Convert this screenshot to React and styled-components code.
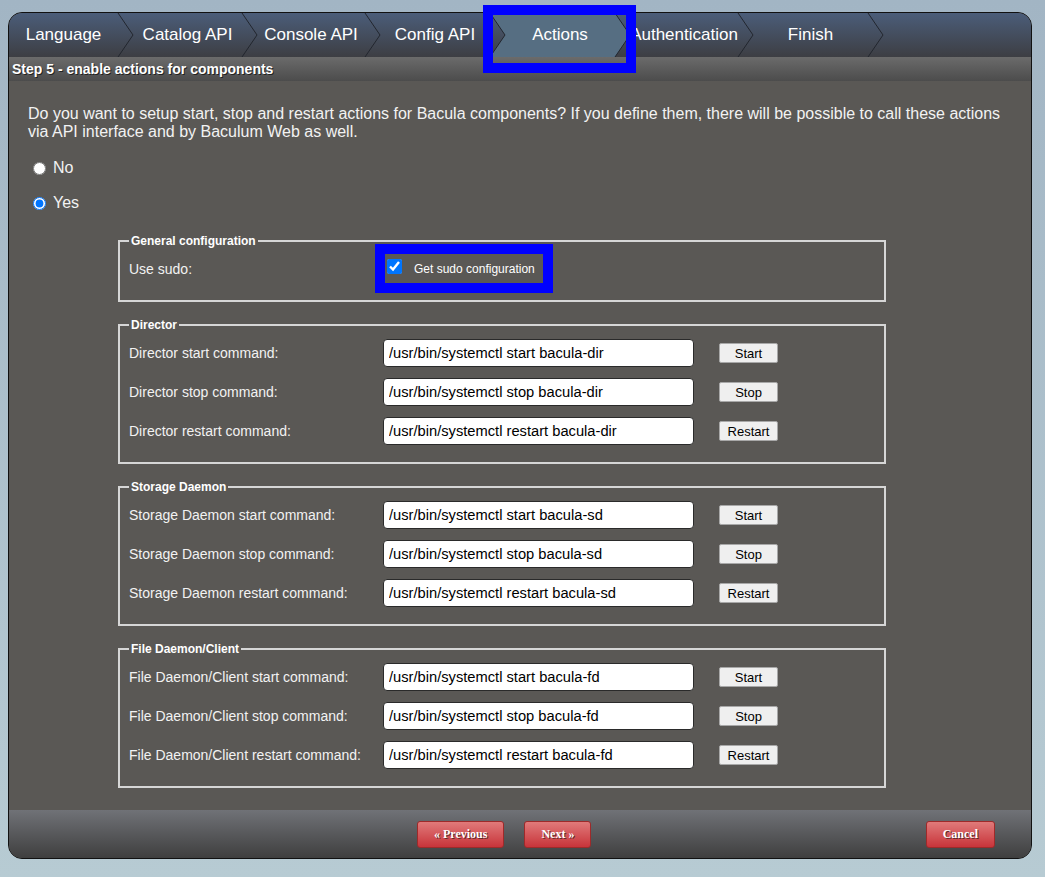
import React from 'react';
import styled, { createGlobalStyle } from 'styled-components';

const GlobalStyle = createGlobalStyle`
  html, body { margin: 0; padding: 0; }
  body {
    background: linear-gradient(#a2b5c4, #b7cbd3);
    min-height: 877px;
    font-family: "Liberation Sans", Arial, sans-serif;
  }
`;

const Page = styled.div`
  box-sizing: border-box;
  min-height: 877px;
  padding: 12px 13px 18px 8px;
`;

const Container = styled.div`
  position: relative;
  border: 1px solid #111;
  border-radius: 14px;
  background: #5a5855;
`;

const TabBar = styled.div`
  display: flex;
  height: 44px;
  border-radius: 13px 13px 0 0;
  background: linear-gradient(#4b5d79, #3d3e43);
`;

const Tab = styled.div`
  position: relative;
  box-sizing: border-box;
  width: ${p => p.$w}px;
  padding-left: ${p => (p.$first ? 0 : 15)}px;
  display: flex;
  align-items: center;
  justify-content: center;
  color: #fff;
  font-size: 17px;
  background: ${p => (p.$active ? '#566e82' : 'transparent')};
`;

const TabLabel = styled.span`
  position: relative;
  z-index: 3;
`;

const Arrow = styled.svg`
  position: absolute;
  top: 0;
  left: 100%;
  width: 15px;
  height: 44px;
  z-index: 2;
  overflow: visible;
`;

const Highlight = styled.div`
  position: absolute;
  left: ${p => p.$l}px;
  top: ${p => p.$t}px;
  width: ${p => p.$w}px;
  height: ${p => p.$h}px;
  box-sizing: border-box;
  border: 10px solid #0000ff;
  z-index: 5;
  pointer-events: none;
`;

const StepHeader = styled.div`
  height: 24px;
  line-height: 24px;
  padding-left: 3px;
  background: linear-gradient(#6b6b6b, #4c4c4c);
  color: #fff;
  font-size: 14px;
  font-weight: bold;
  text-shadow: 1px 1px 0 #222;
`;

const Content = styled.div`
  padding: 24px 20px 22px 19px;
  color: #f2f2f2;
`;

const Intro = styled.p`
  margin: 0;
  font-size: 16px;
  line-height: 18px;
`;

const RadioGroup = styled.div`
  display: flex;
  flex-direction: column;
  gap: 15px;
  margin-top: 17px;
`;

const RadioRow = styled.label`
  display: flex;
  align-items: center;
  height: 20px;
  font-size: 16px;
  gap: 4px;
  input {
    margin: 0 3px 0 5px;
    width: 13px;
    height: 13px;
  }
`;

const Fieldset = styled.fieldset`
  box-sizing: border-box;
  width: 768px;
  margin: ${p => (p.$first ? 21 : 16)}px 0 0 90px;
  padding: 7px 9px 17px;
  border: 2px solid #d6d6d6;
  display: flex;
  flex-direction: column;
  gap: 11px;
`;

const Legend = styled.legend`
  padding: 0 2px;
  font-size: 12px;
  line-height: 14px;
  font-weight: bold;
  color: #fff;
`;

const Row = styled.div`
  display: grid;
  grid-template-columns: 229px 311px 59px;
  column-gap: 25px;
  align-items: center;
  height: 28px;
`;

const Label = styled.span`
  font-size: 14px;
  color: #f2f2f2;
  white-space: nowrap;
`;

const TextInput = styled.input`
  box-sizing: border-box;
  height: 28px;
  width: 311px;
  border: 1px solid #2a2a2a;
  border-radius: 4px;
  padding: 0 5px;
  background: #fff;
  color: #000;
  font-family: "Liberation Sans", Arial, sans-serif;
  font-size: 14.7px;
`;

const SmallButton = styled.button`
  box-sizing: border-box;
  width: 59px;
  height: 20px;
  padding: 0;
  border: 1px solid #a8a8a8;
  border-radius: 2px;
  background: #efefef;
  color: #000;
  font-family: "Liberation Sans", Arial, sans-serif;
  font-size: 13px;
`;

const CheckCell = styled.div`
  position: relative;
  grid-column: 2 / span 2;
  display: flex;
  align-items: center;
  height: 28px;
  input {
    width: 15px;
    height: 15px;
    margin: -6px 12px 0 4px;
  }
`;

const CheckText = styled.span`
  font-size: 12px;
  color: #fff;
`;

const Footer = styled.div`
  display: flex;
  align-items: flex-start;
  height: 48px;
  box-sizing: border-box;
  padding: 11px 36px 0 408px;
  border-radius: 0 0 13px 13px;
  background: linear-gradient(#707277, #3f3f3f);
`;

const RedButton = styled.button`
  box-sizing: border-box;
  height: 27px;
  padding: 0 16px;
  margin-left: ${p => p.$ml || '0'};
  border: 1px solid #9e2a2a;
  border-radius: 3px;
  background: linear-gradient(#e07a7a, #c8343a);
  color: #fff;
  font-family: "Liberation Serif", "Times New Roman", serif;
  font-size: 12px;
  font-weight: bold;
  text-shadow: 1px 1px 0 #5a2a2a;
`;

const tabs = [
  { name: 'Language', w: 109 },
  { name: 'Catalog API', w: 124 },
  { name: 'Console API', w: 123 },
  { name: 'Config API', w: 125 },
  { name: 'Actions', w: 125, active: true },
  { name: 'Authentication', w: 123 },
  { name: 'Finish', w: 130 },
];

const groups = [
  { title: 'Director', short: 'dir' },
  { title: 'Storage Daemon', short: 'sd' },
  { title: 'File Daemon/Client', short: 'fd' },
];

const actions = [
  { key: 'start', btn: 'Start' },
  { key: 'stop', btn: 'Stop' },
  { key: 'restart', btn: 'Restart' },
];

function TabArrow({ id, active }) {
  return (
    <Arrow viewBox="0 0 15 44">
      <defs>
        <linearGradient id={id} x1="0" y1="0" x2="0" y2="1">
          <stop offset="0" stopColor="#4b5d79" />
          <stop offset="1" stopColor="#3d3e43" />
        </linearGradient>
      </defs>
      <polygon points="0,0 15,22 0,44" fill={active ? '#566e82' : `url(#${id})`} />
      <polyline points="0,0 15,22 0,44" fill="none" stroke="#22262e" strokeWidth="1" />
    </Arrow>
  );
}

export default function App() {
  return (
    <>
      <GlobalStyle />
      <Page>
        <Container>
          <TabBar>
            {tabs.map((t, i) => (
              <Tab key={t.name} $w={t.w} $first={i === 0} $active={t.active}>
                <TabLabel>{t.name}</TabLabel>
                <TabArrow id={`ag${i}`} active={t.active} />
                {t.active && <Highlight $l={-7} $t={-8} $w={153} $h={68} />}
              </Tab>
            ))}
          </TabBar>
          <StepHeader>Step 5 - enable actions for components</StepHeader>
          <Content>
            <Intro>
              Do you want to setup start, stop and restart actions for Bacula components? If you define them, there will be possible to call these actions via API interface and by Baculum Web as well.
            </Intro>
            <RadioGroup>
              <RadioRow>
                <input type="radio" name="actions" />
                No
              </RadioRow>
              <RadioRow>
                <input type="radio" name="actions" defaultChecked />
                Yes
              </RadioRow>
            </RadioGroup>

            <Fieldset $first>
              <Legend>General configuration</Legend>
              <Row>
                <Label>Use sudo:</Label>
                <CheckCell>
                  <input type="checkbox" defaultChecked />
                  <CheckText>Get sudo configuration</CheckText>
                  <Highlight $l={-8} $t={-11} $w={178} $h={49} />
                </CheckCell>
              </Row>
            </Fieldset>

            {groups.map(g => (
              <Fieldset key={g.title}>
                <Legend>{g.title}</Legend>
                {actions.map(a => (
                  <Row key={a.key}>
                    <Label>{g.title} {a.key} command:</Label>
                    <TextInput
                      type="text"
                      defaultValue={`/usr/bin/systemctl ${a.key} bacula-${g.short}`}
                    />
                    <SmallButton type="button">{a.btn}</SmallButton>
                  </Row>
                ))}
              </Fieldset>
            ))}
          </Content>
          <Footer>
            <RedButton type="button">« Previous</RedButton>
            <RedButton type="button" $ml="20px">Next »</RedButton>
            <RedButton type="button" $ml="auto">Cancel</RedButton>
          </Footer>
        </Container>
      </Page>
    </>
  );
}
